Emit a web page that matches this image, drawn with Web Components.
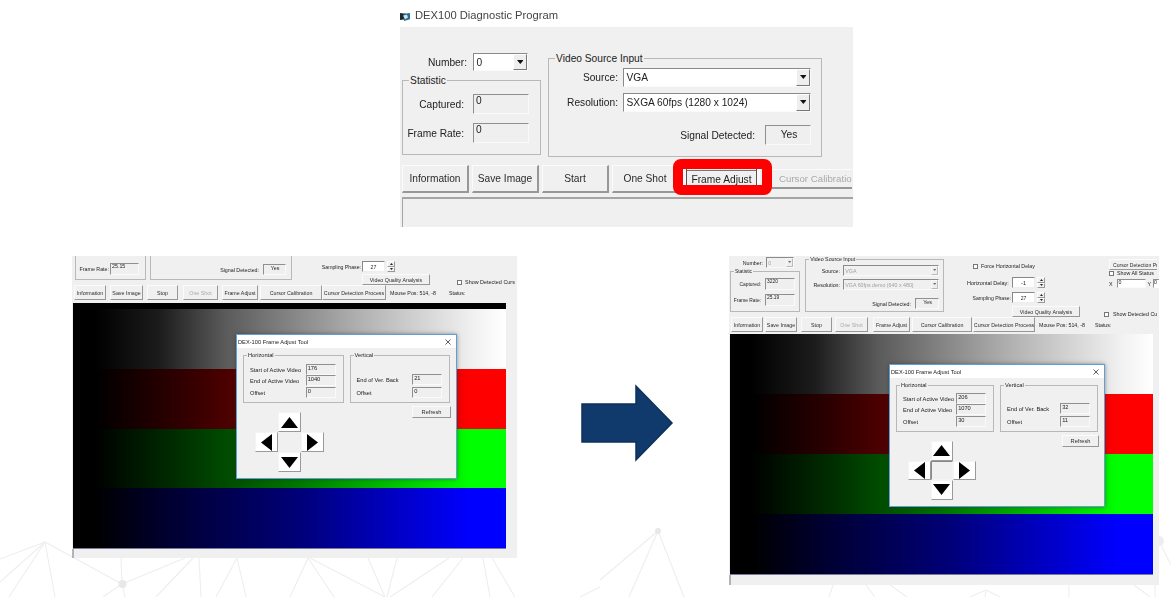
<!DOCTYPE html>
<html lang="en">
<head>
<meta charset="utf-8">
<title>Frame Adjust</title>
<style>
  html, body { margin: 0; background: #fff; }
</style>
</head>
<body>
<slide-canvas>
  <dex-panel style="left:400px;top:11px"></dex-panel>
  <shot-before style="left:72px;top:256px"></shot-before>
  <flow-arrow style="left:580px;top:384px"></flow-arrow>
  <shot-after style="left:729px;top:256px"></shot-after>
</slide-canvas>

<script>
// Base class: subclasses give a static render(attr) that returns the shadow markup
class WinPart extends HTMLElement {
  constructor() {
    super();
    const attr = (name, fallback = '') => this.getAttribute(name) ?? fallback;
    this.attachShadow({ mode: 'open' }).innerHTML = this.constructor.render(attr, this);
  }
}

const triangle = (dir) => {
  const points = { down: '0,0 10,0 5,6', up: '0,6 10,6 5,0' }[dir];
  return `<svg viewBox="0 0 10 6" width="100%" height="100%" style="display:block"><polygon points="${points}" fill="currentColor"/></svg>`;
};

class WinBtn extends WinPart {
  static render() {
    return `<style>
      :host {
        display: inline-flex; align-items: center; justify-content: center; box-sizing: border-box;
        background: #f0f0f0; color: #2b2b2b; white-space: nowrap; overflow: hidden;
        border: 1px solid; border-color: #fbfbfb #979797 #979797 #fbfbfb;
      }
      :host([disabled]) { color: #a9a9a9; }
      :host([clip]) { justify-content: flex-start; padding-left: 7px; border-right: 0; }
    </style><slot></slot>`;
  }
}

class WinField extends WinPart {
  static render() {
    return `<style>
      :host {
        display: block; box-sizing: border-box; padding-left: .2em; line-height: 1.1;
        background: #efefef; color: #222; white-space: nowrap; overflow: hidden;
        border: 1px solid; border-color: #8f8f8f #fafafa #fafafa #8f8f8f;
      }
      :host([center]) { text-align: center; line-height: 1.4; }
    </style><slot></slot>`;
  }
}

class WinCombo extends WinPart {
  static render() {
    return `<style>
      :host {
        display: flex; box-sizing: border-box; align-items: center; background: #fff; color: #222;
        border: 1px solid; border-color: #8a8a8a #fafafa #fafafa #8a8a8a; white-space: nowrap; overflow: hidden;
      }
      :host([disabled]) { background: #f0f0f0; color: #a0a0a0; }
      :host([disabled]) .drop { color: #777; border-color: #f8f8f8 #bbb #bbb #f8f8f8; }
      .text { flex: 1; padding-left: .25em; overflow: hidden; }
      .drop {
        width: 1.35em; align-self: stretch; display: flex; align-items: center; justify-content: center;
        background: #eee; box-sizing: border-box; border: 1px solid; border-color: #fff #777 #777 #fff; color: #111;
      }
      .drop span { width: .65em; height: .4em; }
    </style>
    <span class="text"><slot></slot></span>
    <span class="drop"><span>${triangle('down')}</span></span>`;
  }
}

class WinGroup extends WinPart {
  static render(attr) {
    return `<style>
      :host { display: block; box-sizing: border-box; position: relative; border: 1px solid #b8b8b8; }
      .legend {
        position: absolute; top: -.62em; left: var(--legend-x, .6em); padding: 0 1px;
        background: #f0f0f0; color: #222; line-height: 1.1; white-space: nowrap;
      }
    </style><span class="legend">${attr('label')}</span><slot></slot>`;
  }
}

// label + control, label right aligned to a fixed column
class WinRow extends WinPart {
  static render(attr) {
    return `<style>
      :host { display: flex; align-items: center; color: #222; white-space: nowrap; }
      .label { width: ${attr('lw', '40')}px; margin-right: ${attr('gap', '4')}px; text-align: right; flex: none; }
    </style><span class="label">${attr('label')}</span><slot></slot>`;
  }
}

class WinSpin extends WinPart {
  static render(attr) {
    return `<style>
      :host { display: flex; gap: 2px; height: 11px; flex: none; }
      .box {
        width: 23px; box-sizing: border-box; background: #fff; text-align: center; line-height: 10px; color: #222;
        border: 1px solid; border-color: #888 #eee #eee #888;
      }
      .arrows { width: 8px; display: flex; flex-direction: column; }
      .arrows span {
        flex: 1; display: flex; align-items: center; justify-content: center; box-sizing: border-box;
        background: #f0f0f0; border: 1px solid; border-color: #fff #999 #999 #fff;
      }
      i { width: 3px; height: 2px; display: block; color: #222; }
    </style>
    <span class="box">${attr('value')}</span>
    <span class="arrows"><span><i>${triangle('up')}</i></span><span><i>${triangle('down')}</i></span></span>`;
  }
}

class WinCheck extends WinPart {
  static render() {
    return `<style>
      :host { display: flex; align-items: center; gap: 3px; height: 6px; color: #222; white-space: nowrap; }
      i { width: 5px; height: 5px; flex: none; box-sizing: border-box; background: #fff; border: 1px solid #777; }
    </style><i></i><slot></slot>`;
  }
}

class VideoFeed extends WinPart {
  static render() {
    return `<style>
      :host { display: flex; flex-direction: column; position: relative; box-sizing: border-box; border-bottom: 1px solid #7a7a9a; }
      .band { flex: 1; }
      .top { height: var(--strip, 0); flex: none; background: #000; }
      .grey  { background: linear-gradient(90deg, #000 5%, #1c1c1c 20%, #5a5a5a 35%, #b0b0b0 66%, #f2f2f2 93%, #fff 100%); }
      .red   { background: linear-gradient(90deg, #000 5%, #300000 25%, #780000 52%, #ff0000 92%); }
      .green { background: linear-gradient(90deg, #000 5%, #003000 25%, #007800 52%, #00ff00 92%); }
      .blue  { background: linear-gradient(90deg, #000 5%, #000030 22%, #000078 52%, #0000ff 92%); }
      ::slotted(adjust-tool) { position: absolute; }
    </style>
    <div class="top"></div>
    <div class="band grey"></div><div class="band red"></div><div class="band green"></div><div class="band blue"></div>
    <slot></slot>`;
  }
}

class AdjustTool extends WinPart {
  static render(attr) {
    const arrow = (w, h, pts) => `<svg viewBox="0 0 ${w} ${h}" width="${w}" height="${h}"><polygon points="${pts}" fill="#000"/></svg>`;
    return `<style>
      :host {
        display: flex; flex-direction: column; box-sizing: border-box; background: #f0f0f0; color: #222;
        border: 1px solid #5f9fd4; box-shadow: 0 0 4px rgba(40,40,40,.5);
        font-size: 5.7px;
      }
      .title {
        height: 13px; flex: none; background: #fff; display: flex; justify-content: space-between; align-items: center;
        padding: 0 5px 0 1px;
      }
      .title svg { width: 6px; height: 6px; }
      .groups { display: flex; gap: 6px; margin: 7px 6px 0; }
      win-group { flex: 1; height: var(--group-h); --legend-x: 3px; }
      .rows { display: grid; grid-template-columns: auto 30px; justify-content: space-between; align-items: center; padding: 0 7px 0 6px; }
      .rows span { white-space: nowrap; }
      .rows win-field { height: 11px; }
      .h { padding-top: var(--h-top); grid-template-rows: 11px 11px 11px; row-gap: 0; }
      .h .last { margin-top: 2px; }
      .v { padding-top: var(--v-top); row-gap: 2px; }
      .refresh { align-self: flex-end; margin: var(--refresh-gap) 5px 0 0; width: var(--refresh-w); height: 12px; }
      .pad {
        display: grid; grid-template-columns: repeat(3, var(--cell-w)); grid-template-rows: repeat(3, var(--cell-h));
        margin: var(--pad-top) 0 0 18px; width: max-content;
      }
      .pad span {
        display: flex; align-items: center; justify-content: center; background: #fff; box-sizing: border-box;
        border: 1px solid; border-color: #f4f4f4 #999 #999 #f4f4f4;
      }
      .pad .middle { background: #f0f0f0; border-color: var(--mid-border, transparent); }
    </style>
    <div class="title"><span>DEX-100 Frame Adjust Tool</span>
      <svg viewBox="0 0 6 6"><path d="M.5.5l5 5M5.5.5l-5 5" stroke="#333" stroke-width=".8"/></svg></div>
    <div class="groups">
      <win-group label="Horizontal"><div class="rows h">
        <span>Start of Active Video</span><win-field>${attr('start')}</win-field>
        <span>End of Active Video</span><win-field>${attr('end')}</win-field>
        <span class="last">Offset</span><win-field class="last">${attr('offset')}</win-field>
      </div></win-group>
      <win-group label="Vertical"><div class="rows v">
        <span>End of Ver. Back</span><win-field>${attr('back')}</win-field>
        <span>Offset</span><win-field>${attr('voffset')}</win-field>
      </div></win-group>
    </div>
    <win-btn class="refresh">Refresh</win-btn>
    <div class="pad">
      <i></i><span>${arrow(17, 11, '8.5,0 17,11 0,11')}</span><i></i>
      <span>${arrow(11, 17, '0,8.5 11,0 11,17')}</span><span class="middle"></span><span>${arrow(11, 17, '11,8.5 0,0 0,17')}</span>
      <i></i><span>${arrow(17, 11, '0,0 17,0 8.5,11')}</span><i></i>
    </div>`;
  }
}

// The cropped panel at the top of the slide
class DexPanel extends WinPart {
  static render() {
    return `<style>
      :host { display: block; width: 453px; font-size: 10.2px; color: #222; filter: blur(.3px); }
      .caption { height: 16px; display: flex; gap: 5px; align-items: flex-start; font-size: 11.2px; color: #444; }
      .caption span { margin-top: -2px; }
      .caption svg { width: 10px; height: 9px; margin-top: 1px; flex: none; }
      .body { height: 200px; box-sizing: border-box; background: #f0f0f0; padding: 26px 0 0 2px; display: flex; flex-direction: column; }
      .upper { display: flex; gap: 7px; height: 112px; }
      .left { width: 139px; }
      .number { height: 18px; margin-bottom: 9px; }
      .number win-combo { width: 55px; height: 18px; }
      .stat { height: 75px; padding-top: 13px; display: flex; flex-direction: column; gap: 9px; }
      .stat win-field { width: 56px; height: 20px; }
      .source { width: 274px; height: 99px; margin-top: 5px; padding-top: 9px; display: flex; flex-direction: column; gap: 6px; }
      .source win-combo { width: 188px; height: 19px; }
      .signal { justify-content: flex-end; padding-right: 10px; margin-top: 7px; }
      .signal win-field { width: 46px; height: 20px; }
      .buttons { display: flex; gap: 3px; height: 28px; }
      .buttons win-btn { width: 67px; height: 28px; flex: none; border-width: 1px 2px 2px 1px; }
      .buttons .adjust {
        width: 77px; margin-left: 1px; color: #222; border: 0;
        background: linear-gradient(#777, #777) 4px 5px / 69px 1px no-repeat, #f0f0f0;
        box-shadow: inset 3px 0 0 #fafafa, inset 4px 0 0 #555, inset -3px 0 0 #fafafa, inset -4px 0 0 #555;
      }
      .buttons .calib { width: 81px; margin-left: 8px; height: 20px; align-self: center; font-size: 9.7px; }
      .status { margin: 4px 0 0; flex: 1; background: #f0f0f0; border-top: 2px solid #a5a5a5; border-left: 1px solid #a5a5a5; }
      .lower { position: relative; display: flex; flex-direction: column; flex: 1; margin-right: 0; }
      .mark {
        position: absolute; left: 271px; top: -6px; width: 99px; height: 36px; box-sizing: border-box;
        border: 10px solid #ff0000; border-radius: 8px;
      }
    </style>
    <div class="caption">
      <svg viewBox="0 0 10 10" preserveAspectRatio="none"><path d="M0 1l6 1v6l-6 1z" fill="#1c2b36"/><path d="M4 2l6-1v7l-6 2z" fill="#2d6f8f"/><path d="M3 4l4-1 1 3-3 2z" fill="#cfe6ee"/></svg>
      <span>DEX100 Diagnostic Program</span>
    </div>
    <div class="body">
      <div class="upper">
        <div class="left">
          <win-row class="number" label="Number:" lw="65" gap="6"><win-combo>0</win-combo></win-row>
          <win-group class="stat" label="Statistic">
            <win-row label="Captured:" lw="61" gap="9"><win-field>0</win-field></win-row>
            <win-row label="Frame Rate:" lw="61" gap="9"><win-field>0</win-field></win-row>
          </win-group>
        </div>
        <win-group class="source" label="Video Source Input">
          <win-row label="Source:" lw="69" gap="5"><win-combo>VGA</win-combo></win-row>
          <win-row label="Resolution:" lw="69" gap="5"><win-combo>SXGA 60fps (1280 x 1024)</win-combo></win-row>
          <win-row class="signal" label="Signal Detected:" lw="90" gap="10"><win-field center style="line-height:17px">Yes</win-field></win-row>
        </win-group>
      </div>
      <div class="lower">
        <div class="buttons">
          <win-btn>Information</win-btn>
          <win-btn>Save Image</win-btn>
          <win-btn>Start</win-btn>
          <win-btn>One Shot</win-btn>
          <win-btn class="adjust">Frame Adjust</win-btn>
          <win-btn class="calib" disabled clip>Cursor Calibratio</win-btn>
        </div>
        <div class="status"></div>
        <div class="mark"></div>
      </div>
    </div>`;
  }
}

const shotStyle = `
  :host { display: block; box-sizing: border-box; background: #f0f0f0; overflow: hidden; font-size: 5.3px; color: #222; filter: blur(.35px); padding-left: 1px; }
  .controls { display: flex; align-items: flex-start; }
  .controls > * { flex: none; }
  .buttons { display: flex; align-items: center; }
  .buttons win-btn { height: 15px; flex: none; }
  .buttons .text { white-space: nowrap; }
  win-field { height: 12px; }
  .foot { height: 10px; margin-left: -1px; border-left: 2px solid #b4b4b4; }
`;

class ShotBefore extends WinPart {
  static render() {
    return `<style>${shotStyle}
      :host { width: 445px; height: 302px; }
      .controls { height: 29px; }
      .stat { width: 71px; height: 44px; margin: -20px 0 0 2px; padding: 26px 0 0 2px; }
      .stat win-field { width: 29px; }
      .video { width: 142px; height: 44px; margin: -20px 0 0 4px; padding-top: 27px; }
      .video win-row { justify-content: flex-end; padding-right: 5px; }
      .video win-field { width: 23px; height: 11px; text-align: center; }
      .sampling { margin: 5px 0 0 29px; width: 110px; }
      .sampling win-row { font-size: 5.2px; }
      .sampling win-btn { width: 68px; height: 11px; margin: 2px 0 0 41px; }
      .check { margin: 23px 0 0 26px; gap: 3px; font-size: 5.45px; }
      .buttons { height: 15px; padding-left: 1px; }
      video-feed { width: 433px; height: 246px; margin-top: 3px; --strip: 6px; }
      adjust-tool {
        left: 163px; top: 31px; width: 221px; height: 145px;
        --group-h: 48px; --h-top: 8px; --v-top: 18px; --refresh-w: 39px; --refresh-gap: 3px;
        --pad-top: -6px; --cell-w: 23px; --cell-h: 20px;
      }
    </style>
    <div class="controls">
      <win-group class="stat"><win-row label="Frame Rate:" lw="31" gap="1"><win-field>25.15</win-field></win-row></win-group>
      <win-group class="video"><win-row label="Signal Detected:" lw="42" gap="4"><win-field center>Yes</win-field></win-row></win-group>
      <div class="sampling">
        <win-row label="Sampling Phase:" lw="40" gap="1"><win-spin value="27"></win-spin></win-row>
        <win-btn>Video Quality Analysis</win-btn>
      </div>
      <win-check class="check">Show Detected Curs</win-check>
    </div>
    <div class="buttons">
      <win-btn style="width:32px">Information</win-btn>
      <win-btn style="width:33px;margin-left:4px">Save Image</win-btn>
      <win-btn style="width:31px;margin-left:4px">Stop</win-btn>
      <win-btn style="width:35px;margin-left:5px" disabled>One Shot</win-btn>
      <win-btn style="width:36px;margin-left:4px">Frame Adjust</win-btn>
      <win-btn style="width:62px;margin-left:2px">Cursor Calibration</win-btn>
      <win-btn style="width:64px">Cursor Detection Process</win-btn>
      <span class="text" style="margin-left:4px">Mouse Pos: 514, -8</span>
      <span class="text" style="margin-left:13px">Status:</span>
    </div>
    <video-feed>
      <adjust-tool start="176" end="1040" offset="0" back="21" voffset="0"></adjust-tool>
    </video-feed>
    <div class="foot"></div>`;
  }
}

class ShotAfter extends WinPart {
  static render() {
    return `<style>${shotStyle}
      :host { width: 430px; height: 329px; }
      .controls { height: 61px; }
      .left { width: 70px; }
      .number { height: 11px; margin-top: 1px; }
      .number win-combo { width: 28px; height: 11px; }
      .stat { height: 41px; margin-top: 3px; padding-top: 6px; display: flex; flex-direction: column; gap: 4px; font-size: 4.9px; }
      .stat win-field { width: 30px; }
      .source { width: 139px; height: 53px; margin: 3px 0 0 5px; padding-top: 5px; display: flex; flex-direction: column; gap: 3px; }
      .source win-combo { width: 96px; height: 11px; }
      .signal { justify-content: flex-end; padding-right: 4px; margin-top: 5px; }
      .signal win-field { width: 24px; height: 11px; text-align: center; }
      .delay { margin: 7px 0 0 29px; width: 132px; display: flex; flex-direction: column; }
      .delay win-check { margin-bottom: 8px; }
      .delay win-row { margin-bottom: 4px; }
      .delay .hd { margin-left: -6px; font-size: 5.5px; }
      .delay .sp { margin-left: -1px; font-size: 5.1px; }
      .delay win-btn { width: 68px; height: 11px; margin: -1px 0 0 39px; }
      .cursor { margin: 3px 0 0 0; width: 54px; display: flex; flex-direction: column; align-items: flex-start; white-space: nowrap; }
      .cursor .head { width: 48px; height: 11px; margin-left: 4px; padding-left: 3px; font-size: 5.1px; }
      .cursor win-check { margin: 0 0 0 4px; }
      .xy { display: flex; align-items: center; gap: 2px; margin: 3px 0 0 4px; width: 50px; overflow: hidden; }
      .xy span:first-child { margin-right: 2px; }
      .xy win-field { width: 29px; height: 9px; background: #fff; flex: none; }
      .xy win-field:last-child { padding-left: 0; }
      .xy span + win-field + span { margin-right: 0; }
      .cursor .bottom { margin: 23px 0 0 -1px; gap: 4px; }
      .buttons { height: 15px; padding-left: 1px; }
      video-feed { width: 423px; height: 241px; margin-top: 2px; }
      adjust-tool {
        left: 159px; top: 30px; width: 216px; height: 143px;
        --group-h: 47px; --h-top: 7px; --v-top: 17px; --refresh-w: 37px; --refresh-gap: 3px;
        --pad-top: -6px; --cell-w: 22.5px; --cell-h: 19.5px; --mid-border: #8a8a8a #f4f4f4 #f4f4f4 #8a8a8a;
      }
    </style>
    <div class="controls">
      <div class="left">
        <win-row class="number" label="Number:" lw="33" gap="3"><win-combo disabled>0</win-combo></win-row>
        <win-group class="stat" label="Statistic">
          <win-row label="Captured:" lw="30" gap="4"><win-field>3220</win-field></win-row>
          <win-row label="Frame Rate:" lw="30" gap="4"><win-field>25.19</win-field></win-row>
        </win-group>
      </div>
      <win-group class="source" label="Video Source Input">
        <win-row label="Source:" lw="34" gap="3"><win-combo disabled>VGA</win-combo></win-row>
        <win-row label="Resolution:" lw="34" gap="3"><win-combo disabled>VGA 60fps demo (640 x 480)</win-combo></win-row>
        <win-row class="signal" label="Signal Detected:" lw="60" gap="4"><win-field center>Yes</win-field></win-row>
      </win-group>
      <div class="delay">
        <win-check>Force Horizontal Delay</win-check>
        <win-row class="hd" label="Horizontal Delay:" lw="39" gap="6"><win-spin value="-1"></win-spin></win-row>
        <win-row class="sp" label="Sampling Phase:" lw="39" gap="1"><win-spin value="27"></win-spin></win-row>
        <win-btn>Video Quality Analysis</win-btn>
      </div>
      <div class="cursor">
        <win-btn class="head" clip>Cursor Detection Pr</win-btn>
        <win-check>Show All Status</win-check>
        <div class="xy"><span>X</span><win-field>0</win-field><span>Y</span><win-field>0</win-field></div>
        <win-check class="bottom">Show Detected Cu</win-check>
      </div>
    </div>
    <div class="buttons">
      <win-btn style="width:32px">Information</win-btn>
      <win-btn style="width:32px;margin-left:2px">Save Image</win-btn>
      <win-btn style="width:31px;margin-left:4px">Stop</win-btn>
      <win-btn style="width:33px;margin-left:3px" disabled>One Shot</win-btn>
      <win-btn style="width:37px;margin-left:5px">Frame Adjust</win-btn>
      <win-btn style="width:60px;margin-left:2px">Cursor Calibration</win-btn>
      <win-btn style="width:62px;margin-left:1px">Cursor Detection Process</win-btn>
      <span class="text" style="margin-left:4px">Mouse Pos: 514, -8</span>
      <span class="text" style="margin-left:10px">Status:</span>
    </div>
    <video-feed>
      <adjust-tool start="206" end="1070" offset="30" back="32" voffset="11"></adjust-tool>
    </video-feed>
    <div class="foot"></div>`;
  }
}

class FlowArrow extends WinPart {
  static render() {
    return `<style>:host { display: block; width: 94px; height: 78px; }</style>
    <svg viewBox="0 0 94 78" width="94" height="78" style="display:block">
      <polygon points="2,20 56,20 56,2 92,39 56,76 56,58 2,58" fill="#0f3a6b" stroke="#0c3059" stroke-width="1.5"/>
    </svg>`;
  }
}

// Page: faint mesh of lines behind the pictures, which sit on it like windows on a desktop
class SlideCanvas extends WinPart {
  static render() {
    const lines = [
      [45,542,0,559],[45,542,0,582],[45,542,9,597],[45,542,55,597],[45,542,122,584],
      [122,584,121,558],[122,584,185,558],[122,584,103,597],[122,584,125,597],
      [193,558,156,597],[199,558,201,597],[237,558,216,597],[237,558,246,597],
      [308,558,290,597],[308,558,334,597],[310,558,385,597],[368,558,385,597],[397,558,387,597],
      [449,558,390,597],[463,558,432,597],[483,558,490,597],[492,558,515,597],[600,587,580,597],
      [658,531,600,580],[658,531,629,597],[658,531,684,597],
      [833,585,829,597],[866,585,875,597],[890,585,907,597],
      [986,590,970,597],[986,590,1000,597],[986,590,985,597],
      [1069,585,1069,597],[1134,585,1150,597],[1155,585,1155,597],[1159,541,1171,565]
    ].map(([a, b, c, d]) => `<line x1="${a}" y1="${b}" x2="${c}" y2="${d}"/>`).join('');
    return `<style>
      :host { display: block; position: relative; width: 1171px; height: 597px; overflow: hidden; background: #fff; font-family: "Liberation Sans", Arial, sans-serif; }
      svg { position: absolute; inset: 0; }
      ::slotted(*) { position: absolute; }
    </style>
    <svg width="1171" height="597" stroke="#eeeeee" stroke-width="1.1">${lines}
      <circle cx="122.5" cy="584" r="4" fill="#e8e8e8" stroke="none"/>
      <circle cx="658" cy="531" r="3" fill="#e8e8e8" stroke="none"/>
      <circle cx="1159" cy="541" r="5" fill="#eee" stroke="none"/>
    </svg>
    <slot></slot>`;
  }
}

// children first, so their shadow content is ready when the parents render
customElements.define('win-btn', WinBtn);
customElements.define('win-field', WinField);
customElements.define('win-combo', WinCombo);
customElements.define('win-group', WinGroup);
customElements.define('win-row', WinRow);
customElements.define('win-spin', WinSpin);
customElements.define('win-check', WinCheck);
customElements.define('video-feed', VideoFeed);
customElements.define('adjust-tool', AdjustTool);
customElements.define('dex-panel', DexPanel);
customElements.define('shot-before', ShotBefore);
customElements.define('shot-after', ShotAfter);
customElements.define('flow-arrow', FlowArrow);
customElements.define('slide-canvas', SlideCanvas);
</script>
</body>
</html>
